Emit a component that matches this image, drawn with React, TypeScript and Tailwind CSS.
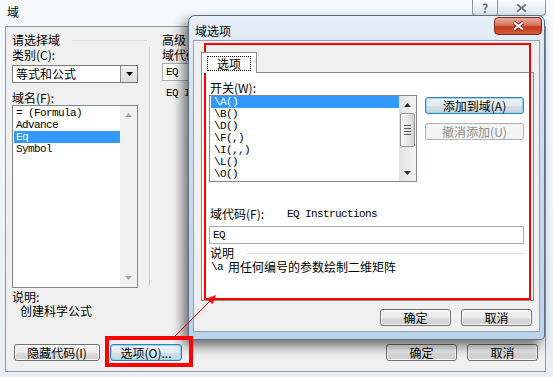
import React from "react";

const cjk = "font-['Noto_Sans_CJK_SC','Noto_Sans_CJK_JP',sans-serif]";
const mono = "font-['Liberation_Mono',monospace] text-[11px] tracking-[-0.6px]";

const btnBase =
  "flex h-[17px] items-center justify-center rounded-[3px] border text-[12px] leading-none";
const btnNormal = `${btnBase} border-[#707070] bg-[linear-gradient(#f2f2f2_0%,#ebebeb_50%,#dddddd_50%,#cfcfcf_100%)] shadow-[inset_0_0_0_1px_#fbfbfb]`;
const btnFocus = `${btnBase} border-[#3c7fb1] bg-[linear-gradient(#eef4f8_0%,#e3ecf2_50%,#d3dfe8_50%,#c9d7e2_100%)] shadow-[inset_0_0_0_1px_#8fd8f7]`;
const btnDisabled = `${btnBase} border-[#adb2b5] bg-[#f4f4f4] text-[#8d8d8d]`;

const Tri = ({ up, color }: { up?: boolean; color: string }) => (
  <svg width="7" height="4" viewBox="0 0 7 4">
    <polygon points={up ? "0,4 7,4 3.5,0" : "0,0 7,0 3.5,4"} fill={color} />
  </svg>
);

const XGlyph = ({ fill, edge }: { fill: string; edge: string }) => (
  <svg width="13" height="10" viewBox="0 0 13 10">
    <path d="M2 1.5 L11 8.5 M11 1.5 L2 8.5" stroke={edge} strokeWidth="4" />
    <path d="M2 1.5 L11 8.5 M11 1.5 L2 8.5" stroke={fill} strokeWidth="2" />
  </svg>
);

const Scroll = () => (
  <div className="flex w-[17px] flex-col bg-[linear-gradient(90deg,#e3e3e3,#f4f4f4)]">
    <div className="flex h-[17px] items-center justify-center">
      <Tri up color="#2b2b2b" />
    </div>
    <div className="mx-[1px] flex h-[34px] flex-col items-center justify-center gap-[2px] rounded-[2px] border border-[#969696] bg-[linear-gradient(90deg,#f6f6f6,#e8e8e8_50%,#d4d4d4)]">
      <div className="h-px w-[7px] bg-[#5a5a5a]" />
      <div className="h-px w-[7px] bg-[#5a5a5a]" />
      <div className="h-px w-[7px] bg-[#5a5a5a]" />
      <div className="h-px w-[7px] bg-[#5a5a5a]" />
    </div>
    <div className="flex-1" />
    <div className="flex h-[17px] items-center justify-center">
      <Tri color="#2b2b2b" />
    </div>
  </div>
);

const fields = ["= (Formula)", "Advance", "Eq", "Symbol"];
const switches = ["\\A()", "\\B()", "\\D()", "\\F(,)", "\\I(,,)", "\\L()", "\\O()"];

export default function App() {
  return (
    <div
      className={`relative h-[377px] w-[553px] overflow-hidden bg-[linear-gradient(#f7fafd,#e7eef6)] text-[12px] leading-[14px] text-black ${cjk}`}
    >
      {/* main window title */}
      <div className="flex h-[26px]">
        <span className="ml-[7px] mt-[5px]">域</span>
        <div className="ml-auto mr-[7px] flex h-[16px]">
          <div className="flex w-[26px] items-center justify-center rounded-bl-[4px] border border-t-0 border-[#8b97a5] bg-[linear-gradient(#fbfcfe,#e1e8f0)] text-[12px] font-bold text-[#606b77]">
            ?
          </div>
          <div className="flex w-[48px] items-center justify-center rounded-br-[4px] border border-l-0 border-t-0 border-[#8b97a5] bg-[linear-gradient(#fbfcfe,#e1e8f0)]">
            <XGlyph fill="#6b7581" edge="#ffffff" />
          </div>
        </div>
      </div>

      {/* main window client */}
      <div className="ml-[5px] mr-[7px] flex h-[346px] flex-col border border-[#8d99a6] bg-[#f0f0f0]">
        <div className="flex pt-[6px]">
          <div className="ml-[6px] flex w-[137px] flex-col">
            <div className="flex h-[14px] items-center">
              <span>请选择域</span>
              <div className="ml-[12px] mr-[2px] h-px flex-1 bg-[#d5dfe5]" />
            </div>
            <div className="mt-[1px]">类别(C):</div>
            <div className="mt-[3px] flex h-[18px] w-[126px] border border-[#7a7a7a] bg-white">
              <span className="flex-1 pl-[3px] leading-[16px]">等式和公式</span>
              <div className="flex w-[17px] items-center justify-center border-l border-[#8c8c8c] bg-[linear-gradient(#f2f2f2,#dcdcdc)]">
                <Tri color="#000000" />
              </div>
            </div>
            <div className="mt-[9px] leading-[12px]">域名(F):</div>
            <div className="mt-[1px] flex h-[183px] w-[126px] border border-[#828790] bg-white">
              <div className={`flex-1 pl-[1px] pt-[1px] ${mono}`}>
                {fields.map((f) => (
                  <div
                    key={f}
                    className={
                      f === "Eq"
                        ? "h-[12px] whitespace-pre bg-[#3399ff] pl-[2px] leading-[12px] text-white"
                        : "h-[12px] whitespace-pre pl-[2px] leading-[12px]"
                    }
                  >
                    {f}
                  </div>
                ))}
              </div>
              <div className="flex w-[17px] flex-col items-center justify-between bg-[#f1f1f1] py-[7px]">
                <Tri up color="#a6a6a6" />
                <Tri color="#a6a6a6" />
              </div>
            </div>
            <div className="mt-[3px] h-[12px] leading-[12px]">说明:</div>
            <div className="mt-[1px] h-[13px] pl-[8px] leading-[13px]">创建科学公式</div>
          </div>

          <div className="mt-[14px] h-[238px] w-[2px] border-l border-r border-l-[#c9c9c9] border-r-white" />

          <div className="ml-[11px] flex flex-1 flex-col">
            <div className="h-[14px]">高级</div>
            <div className="mt-[1px]">域代码</div>
            <div className={`mt-[1px] h-[18px] border border-[#abadb3] bg-white pl-[3px] leading-[16px] ${mono}`}>
              EQ
            </div>
            <div className={`mt-[5px] pl-[4px] ${mono}`}>EQ Instructions</div>
          </div>
        </div>

        <div className="mb-[10px] mt-auto flex">
          <div className={`${btnNormal} ml-[8px] w-[86px]`}>隐藏代码(I)</div>
          <div className={`${btnFocus} ml-[10px] w-[72px]`}>选项(O)...</div>
          <div className={`${btnNormal} ml-auto w-[71px]`}>确定</div>
          <div className={`${btnNormal} ml-[10px] mr-[7px] w-[71px]`}>取消</div>
        </div>
      </div>

      {/* options dialog */}
      <div className="absolute left-[188px] top-[15px] flex h-[325px] w-[357px] flex-col rounded-b-[4px] rounded-t-[7px] border border-[#5b6d82] bg-[linear-gradient(#e6eef7,#cfdff1_30%,#bcd3ec)] shadow-[-5px_6px_12px_rgba(0,0,0,0.55)]">
        <div className="flex h-[24px]">
          <span className="ml-[6px] mt-[8px]">域选项</span>
          <div className="ml-auto mr-[2px] mt-[1px] flex h-[18px] w-[48px] items-center justify-center rounded-[4px] border border-[#7a2a1c] bg-[linear-gradient(#eaaa9c,#d8765f_45%,#c33a20_55%,#d45b3b)]">
            <XGlyph fill="#ffffff" edge="#7a2a1c" />
          </div>
        </div>

        <div className="ml-[4px] flex h-[292px] w-[347px] flex-col border border-[#8ea3ba] bg-[#f0f0f0]">
          <div className="relative z-10 -mb-px ml-[7px] mt-[11px] flex h-[21px] w-[56px] items-center justify-center border border-b-0 border-[#898c95] bg-white">
            <span className="border border-dotted border-black px-[9px] leading-[13px]">选项</span>
          </div>
          <div className="ml-[7px] flex h-[229px] w-[333px] flex-col border border-[#898c95] bg-white">
            <div className="ml-[8px] mt-[9px] h-[12px] leading-[12px]">开关(W):</div>
            <div className="ml-[7px] mt-[1px] flex">
              <div className="flex h-[87px] w-[208px] border border-[#828790] bg-white">
                <div className={`flex-1 pl-[1px] ${mono}`}>
                  {switches.map((s, i) => (
                    <div
                      key={s}
                      className={
                        i === 0
                          ? "h-[12px] bg-[#3399ff] pl-[3px] leading-[12px] text-white"
                          : "h-[12px] pl-[3px] leading-[12px]"
                      }
                    >
                      {s}
                    </div>
                  ))}
                </div>
                <Scroll />
              </div>
              <div className="ml-[8px] mt-[2px] flex flex-col gap-[9px]">
                <div className={`${btnFocus} w-[99px]`}>添加到域(A)</div>
                <div className={`${btnDisabled} w-[99px]`}>撤消添加(U)</div>
              </div>
            </div>

            <div className="ml-[8px] mt-[25px] flex h-[14px]">
              <span className="w-[77px]">域代码(F):</span>
              <span className={mono}>EQ Instructions</span>
            </div>
            <div className={`ml-[7px] mt-[5px] h-[18px] w-[315px] border border-[#abadb3] bg-white pl-[3px] leading-[16px] ${mono}`}>
              EQ
            </div>
            <div className="ml-[8px] mt-[2px] flex h-[14px] items-center">
              <span>说明</span>
              <div className="ml-[12px] mr-[9px] h-px flex-1 bg-[#d5dfe5]" />
            </div>
            <div className="ml-[9px] flex h-[14px] items-center">
              <span className={`w-[17px] ${mono}`}>{"\\a"}</span>
              <span>用任何编号的参数绘制二维矩阵</span>
            </div>
          </div>

          <div className="mr-[7px] mt-[8px] flex justify-end gap-[10px]">
            <div className={`${btnNormal} w-[71px]`}>确定</div>
            <div className={`${btnNormal} w-[71px]`}>取消</div>
          </div>
        </div>
      </div>

      {/* annotations */}
      <div className="pointer-events-none absolute left-[105px] top-[336px] h-[31px] w-[88px] border-4 border-[#ff0000]" />
      <div className="pointer-events-none absolute left-[204px] top-[43px] h-[257px] w-[327px] border-2 border-[#ff0000]" />
      <svg className="pointer-events-none absolute left-0 top-0" width="553" height="377">
        <line x1="174" y1="337" x2="210" y2="301" stroke="#ff0000" strokeWidth="1" />
        <polygon points="216,295 212.4,304.2 206.8,298.6" fill="#ff0000" />
      </svg>
    </div>
  );
}
